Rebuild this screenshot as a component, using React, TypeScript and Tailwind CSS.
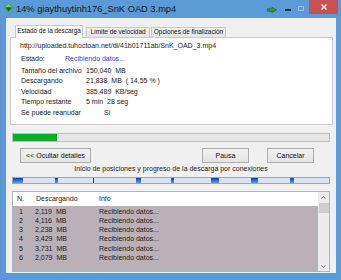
import React from 'react';

const details = [
  { label: 'Tamaño del archivo', value: '150,040  MB' },
  { label: 'Descargando', value: '21,838  MB  ( 14,55 % )' },
  { label: 'Velocidad', value: '385,489  KB/seg' },
  { label: 'Tiempo restante', value: '5 min  28 seg' },
];

// positions of the connection markers on the bar, in px from its left edge
const marks = [
  { left: 0, width: 10 },
  { left: 42, width: 3 },
  { left: 123, width: 5 },
  { left: 158, width: 3 },
  { left: 198, width: 8 },
  { left: 238, width: 7 },
  { left: 277, width: 4 },
];

const connections = [
  { n: 1, size: '2,119  MB' },
  { n: 2, size: '4,116  MB' },
  { n: 3, size: '2,238  MB' },
  { n: 4, size: '3,429  MB' },
  { n: 5, size: '3,731  MB' },
  { n: 6, size: '2,079  MB' },
];

const Button = ({ label, className }: { label: string; className: string }) => (
  <div
    className={`h-[15px] border border-[#adadad] bg-gradient-to-b from-[#f2f2f2] to-[#e3e3e3] flex items-center justify-center text-[7px] leading-none text-[#111] whitespace-nowrap ${className}`}
  >
    {label}
  </div>
);

export default function App() {
  return (
    <div className="w-[341px] h-[280px] bg-[#5b9ad7] flex flex-col font-['Liberation_Sans',Arial,sans-serif] text-black overflow-hidden">
      {/* Title bar */}
      <div className="h-[18px] shrink-0 flex items-start">
        <svg className="ml-[3px] mt-[3px]" width="11" height="10" viewBox="0 0 11 10">
          <path d="M5.5 0.3 L10.6 4.8 L5.5 9.8 L0.4 4.8 Z" fill="#46a83f" />
          <path d="M5.5 1.2 L9.2 4.6 L5.5 3.6 L1.8 4.6 Z" fill="#8fd36f" />
          <path d="M2.6 4.6 H8.4 L5.5 8.2 Z" fill="#1f5e22" />
        </svg>
        <span className="ml-[2px] mt-[4px] text-[9.3px] leading-[10px] text-[#101820] whitespace-pre">
          14% giaythuytinh176_SnK OAD 3.mp4
        </span>
        <div className="ml-auto mr-[3px] flex items-start">
          <svg className="mt-[7px]" width="10" height="6" viewBox="0 0 10 6">
            <path d="M0.5 1.8 H5 V0.4 L9.5 3 L5 5.6 V4.2 H0.5 Z" fill="#3f9b3a" stroke="#1d4d1d" strokeWidth="0.6" />
          </svg>
          <div className="ml-[8px] mt-[9px] w-[6px] h-[1.5px] bg-[#1c2a3a]" />
          <div className="ml-[7px] mt-[6px] w-[6px] h-[5px] border border-[#9cc1e6]" />
          <div className="ml-[5px] w-[29px] h-[14px] bg-[#c75050] flex items-center justify-center">
            <svg width="6" height="6" viewBox="0 0 6 6">
              <path d="M0.5 0.5 L5.5 5.5 M5.5 0.5 L0.5 5.5" stroke="#ffffff" strokeWidth="1.4" />
            </svg>
          </div>
        </div>
      </div>

      {/* Client area */}
      <div className="flex-1 ml-[6px] mr-[5px] mb-[7px] bg-[#f0f0f0] flex flex-col">
        {/* Tabs */}
        <div className="mt-[7px] h-[12px] flex items-end pl-[9px] relative z-10 text-[6.4px] leading-none whitespace-nowrap text-[#111]">
          <div className="w-[68px] h-[13px] -mb-px bg-white border-x border-t border-[#c9c9c9] flex items-center justify-center pb-px">
            Estado de la descarga
          </div>
          <div className="ml-[3px] w-[64px] h-[10px] bg-gradient-to-b from-[#f0f0f0] to-[#e5e5e5] border-x border-t border-[#c9c9c9] flex items-center justify-center">
            Límite de velocidad
          </div>
          <div className="ml-[1px] w-[75px] h-[10px] bg-gradient-to-b from-[#f0f0f0] to-[#e5e5e5] border-x border-t border-[#c9c9c9] flex items-center justify-center">
            Opciones de finalización
          </div>
        </div>

        {/* Tab panel */}
        <div className="ml-[4px] mr-[3px] h-[88px] bg-white border border-[#c9c9c9] text-[7px] leading-[10px] text-[#1a1a1a]">
          <div className="mt-[3px] pl-[9px] whitespace-pre">
            http://uploaded.tuhoctoan.net/dl/41b01711ab/SnK_OAD_3.mp4
          </div>
          <div className="mt-[3px] pl-[10px] flex">
            <span className="w-[44px]">Estado:</span>
            <span className="text-[#1f3fe6]">Recibiendo datos...</span>
          </div>
          <div className="mt-[2px] pl-[10px] grid grid-cols-[65px_1fr] auto-rows-[10.4px] leading-[10.4px]">
            {details.map((d) => (
              <React.Fragment key={d.label}>
                <span>{d.label}</span>
                <span className="whitespace-pre">{d.value}</span>
              </React.Fragment>
            ))}
            <span>Se puede reanudar</span>
            <span className="pl-[18px]">Si</span>
          </div>
        </div>

        {/* Progress */}
        <div className="mt-[8px] mx-[6px] h-[9px] border border-[#bcbcbc] bg-[#e6e6e6]">
          <div className="w-[44px] h-full bg-[#06b025]" />
        </div>

        {/* Buttons */}
        <div className="mt-[6px] flex">
          <Button label="<< Ocultar detalles" className="ml-[14px] w-[71px]" />
          <Button label="Pausa" className="ml-[111px] w-[47px]" />
          <Button label="Cancelar" className="ml-[18px] w-[47px]" />
        </div>

        <div className="mt-[1px] mx-[6px] h-[10px] text-center text-[7px] leading-[10px] text-[#1a1a1a] whitespace-nowrap">
          Inicio de posiciones y progreso de la descarga por conexiones
        </div>

        {/* Connections bar */}
        <div className="mt-[3px] mx-[6px] h-[7px] relative border border-[#9ea7b5] bg-[#dbe3ef]">
          {marks.map((m) => (
            <div
              key={m.left}
              className="absolute top-0 bottom-0 bg-gradient-to-b from-[#1e3aa8] via-[#2f6fd8] to-[#45a6ec]"
              style={{ left: m.left, width: m.width }}
            />
          ))}
          <div className="absolute top-0 bottom-0 left-[80px] w-px bg-[#333]" />
        </div>

        {/* Connections list */}
        <div className="mt-[7px] mx-[6px] h-[81px] border border-[#aeb4bc] bg-white flex text-[7px] text-[#222]">
          <div className="flex-1 flex flex-col">
            <div className="h-[14px] grid grid-cols-[22px_64px_1fr] items-center bg-white">
              <span className="pl-[4px]">N.</span>
              <span className="pl-[1px]">Descargando</span>
              <span>Info</span>
            </div>
            <div className="flex-1 bg-[#bab0b8] pt-[0.5px]">
              {connections.map((c) => (
                <div key={c.n} className="h-[9.3px] leading-[9.3px] grid grid-cols-[22px_64px_1fr]">
                  <span className="pl-[6px]">{c.n}</span>
                  <span className="whitespace-pre">{c.size}</span>
                  <span>Recibiendo datos...</span>
                </div>
              ))}
            </div>
          </div>
          <div className="w-[11px] bg-[#ececec] flex flex-col items-center">
            <div className="h-[10px] flex items-center justify-center">
              <svg width="5" height="3" viewBox="0 0 5 3">
                <path d="M0.5 2.5 L2.5 0.5 L4.5 2.5" fill="none" stroke="#606060" strokeWidth="0.9" />
              </svg>
            </div>
            <div className="mt-px w-[10px] h-[10px] bg-[#cdcdcd]" />
            <div className="mt-auto h-[10px] flex items-center justify-center">
              <svg width="5" height="3" viewBox="0 0 5 3">
                <path d="M0.5 0.5 L2.5 2.5 L4.5 0.5" fill="none" stroke="#606060" strokeWidth="0.9" />
              </svg>
            </div>
          </div>
        </div>
      </div>
    </div>
  );
}
